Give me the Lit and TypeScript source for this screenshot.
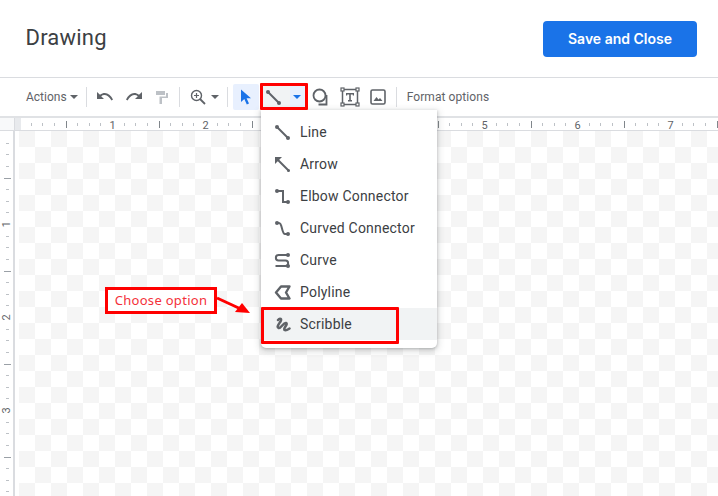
import { LitElement, html, css, svg } from "lit";
import { customElement } from "lit/decorators.js";

const ic = "#5f6368";
const menuIcons: Record<string, unknown> = {
  line: svg`<path d="M3 3L14 14" stroke=${ic} stroke-width="2"/><circle cx="3" cy="3" r="2" fill=${ic}/><circle cx="14" cy="14" r="2" fill=${ic}/>`,
  arrow: svg`<path d="M4 4L15 15" stroke=${ic} stroke-width="2"/><path d="M1 1H8L1 8Z" fill=${ic}/><circle cx="14.5" cy="14.500" r="1.500" fill=${ic}/>`,
  elbow: svg`<path d="M3 3H9V14H14" stroke=${ic} stroke-width="2" fill="none"/><circle cx="3" cy="3" r="2" fill=${ic}/><circle cx="14" cy="14" r="2" fill=${ic}/>`,
  curved: svg`<path d="M3 3H5C8.500 3 7.500 14 11 14H14" stroke=${ic} stroke-width="2" fill="none"/><circle cx="3" cy="3" r="2" fill=${ic}/><circle cx="14" cy="14" r="2" fill=${ic}/>`,
  curve: svg`<path d="M13 3H4.500C1 3 1 8.500 4.500 8.500H11.500C15 8.500 15 14 11.500 14H1.500" stroke=${ic} stroke-width="2" fill="none"/><circle cx="14" cy="3" r="2" fill=${ic}/><circle cx="14" cy="14" r="2" fill=${ic}/>`,
  polyline: svg`<path d="M7 2.500H15.500L12 8.500L15.500 14.500H7L2 8.500Z" stroke=${ic} stroke-width="2.400" fill="none" stroke-linejoin="round"/>`,
  scribble: svg`<path d="M4 4C6 1.500 8 3 6.500 5.500C4.500 8.500 2.500 11 4.500 12C7 13 9.500 6 12 7C14.500 8 9 12 10.500 14C12 15 14 13.500 15.500 12.500" stroke=${ic} stroke-width="2.500" fill="none" stroke-linecap="round"/>`,
};
const items = [
  ["Line", "line"],
  ["Arrow", "arrow"],
  ["Elbow Connector", "elbow"],
  ["Curved Connector", "curved"],
  ["Curve", "curve"],
  ["Polyline", "polyline"],
  ["Scribble", "scribble"],
];

const PX = 93;
function hRuler() {
  const out: unknown[] = [];
  for (let i = 0; i < 8; i++) {
    const base = 19 + i * PX;
    for (let k = 0; k < 8; k++) {
      const x = Math.round(base + (k * PX) / 8) + 0.5 - 21;
      if (x < 0) continue;
      if (k === 0) {
        // inches 3 and 4 lie beneath the open menu
        if (i > 0 && i !== 3 && i !== 4) out.push(svg`<text x=${x} y="11" text-anchor="middle" class="n">${i}</text>`);
      } else if (k === 4) {
        out.push(svg`<line x1=${x} x2=${x} y1="3" y2="10" stroke="#80868b"/>`);
      } else {
        out.push(svg`<line x1=${x} x2=${x} y1="5" y2="8" stroke="#bdc1c6"/>`);
      }
    }
  }
  return svg`<svg class="rsvg" width="697" height="13">${out}</svg>`;
}
function vRuler() {
  const out: unknown[] = [];
  for (let i = 0; i < 4; i++) {
    const base = i * 93;
    for (let k = 0; k < 8; k++) {
      const y = Math.round(base + (k * 93) / 8) + 0.5;
      if (k === 0) {
        if (i > 0) out.push(svg`<text x="7" y=${y + 3} text-anchor="middle" class="n" transform=${`rotate(-90 7 ${y})`}>${i}</text>`);
      } else if (k === 4) {
        out.push(svg`<line y1=${y} y2=${y} x1="4" x2="11" stroke="#9aa0a6"/>`);
      } else {
        out.push(svg`<line y1=${y} y2=${y} x1="6" x2="9" stroke="#bdc1c6"/>`);
      }
    }
  }
  return svg`<svg class="rsvg" width="14" height="365">${out}</svg>`;
}

@customElement("app-root")
export class AppRoot extends LitElement {
  static styles = css`
    :host { display: block; position: relative; width: 718px; height: 496px; overflow: hidden; background: #fff; font-family: Roboto, "Liberation Sans", sans-serif; color: #3c4043; }
    .head { height: 78px; box-sizing: border-box; display: flex; align-items: center; justify-content: space-between; padding: 0 21px 3px 25.5px; border-bottom: 1px solid #dadce0; }
    .title { font-size: 22px; color: #3c4043; letter-spacing: 0.2px; }
    .save { width: 154px; height: 36px; margin-top: 3px; border-radius: 4px; background: #1a73e8; color: #fff; display: flex; align-items: center; justify-content: center; font: 600 14px Inter, Roboto, sans-serif; }
    .tb { height: 38px; display: flex; align-items: center; padding-left: 26px; box-sizing: border-box; font-size: 12px; color: #5f6368; }
    .lbl { font-size: 12px; color: #5f6368; }
    .fmt { margin-left: 10px; letter-spacing: 0.08px; }
    .caret { width: 0; height: 0; border: 4px solid transparent; border-top-color: #5f6368; border-bottom: 0; }
    .sep { width: 1px; height: 20px; background: #dadce0; flex: none; }
    .tool { display: flex; align-items: center; justify-content: center; height: 26px; flex: none; }
    .sel { background: #e8f0fe; border-radius: 2px; }
    .hov { background: #f1f3f4; }
    .blue .caret { border-top-color: #1a73e8; margin-right: 3px; }
    .rulers { height: 15px; display: flex; box-sizing: border-box; border-top: 2px solid #e0e2e5; border-bottom: 1px solid #dadce0; }
    .corner { width: 15px; background: #f8f9fa; border-right: 1px solid #dadce0; box-sizing: border-box; flex: none; }
    .cgap { width: 6px; background: #e8eaed; flex: none; }
    .rsvg { display: block; flex: none; }
    .n { font: 11px Roboto, sans-serif; fill: #5f6368; }
    .main { display: flex; height: 365px; }
    .vr { width: 15px; box-sizing: border-box; border-right: 2px solid #dadce0; flex: none; }
    .gap { width: 4px; flex: none; }
    .canvas { flex: 1; background: repeating-conic-gradient(#f5f5f5 0 25%, #fff 0 50%) 16px 0 / 32px 32px; }
    .menu { position: absolute; left: 261px; top: 110px; width: 176px; height: 238px; box-sizing: border-box; padding: 6px 0; background: #fff; border-radius: 0 0 5px 5px; box-shadow: 0 1px 3px rgba(60,64,67,.3), 0 2px 6px 2px rgba(60,64,67,.15); }
    .it { height: 32px; display: flex; align-items: center; font-size: 14px; color: #3c4043; padding-left: 13px; letter-spacing: 0.2px; }
    .it svg { margin-right: 9px; flex: none; }
    .it.on { background: #f1f3f4; }
    .box { position: absolute; border: 3px solid #f00; box-sizing: border-box; border-radius: 1px; }
    .note { position: absolute; left: 105px; top: 287px; width: 112px; height: 27px; padding-bottom: 1px; border: 3px solid #f00; box-sizing: border-box; background: #fff; color: #f4303a; font: 13px "Noto Sans", "Open Sans", sans-serif; display: flex; align-items: center; justify-content: center; letter-spacing: 0.3px; }
    .arr { position: absolute; left: 215px; top: 294px; }
  `;

  render() {
    return html`
      <div class="head"><div class="title">Drawing</div><div class="save">Save and Close</div></div>
      <div class="tb">
        <span class="lbl">Actions</span><span class="caret" style="margin:0 8px 0 3px"></span>
        <span class="sep"></span>
        <span class="tool" style="width:18px;margin-left:9px">
          <svg width="18" height="12" viewBox="0 0 18 12"><path d="M1 1V8H8L5.200 5.200C7.800 3 12 3.500 15.500 9.500L17 8.500C14 2 8.500 0 4 3.800Z" fill="#5f6368"/></svg>
        </span>
        <span class="tool" style="width:18px;margin-left:11px">
          <svg width="18" height="12" viewBox="0 0 18 12"><path d="M17 1V8H10L12.800 5.200C10.200 3 6 3.500 2.500 9.500L1 8.500C4 2 9.500 0 14 3.800Z" fill="#5f6368"/></svg>
        </span>
        <span class="tool" style="width:14px;margin-left:12px">
          <svg width="14" height="15" viewBox="0 0 14 15"><path d="M1 1H10V5H1ZM11 3H13V8H7V14H4.500V6.500H11Z" fill="#bdc1c6"/></svg>
        </span>
        <span class="sep" style="margin-left:10px"></span>
        <span class="tool" style="width:16px;margin-left:10px">
          <svg width="16" height="16" viewBox="0 0 16 16"><circle cx="6.500" cy="6.500" r="5" fill="none" stroke="#5f6368" stroke-width="1.400"/><path d="M10 10L15 15" stroke="#5f6368" stroke-width="1.800"/><path d="M4 6.500H9M6.500 4V9" stroke="#5f6368" stroke-width="1.200"/></svg>
        </span>
        <span class="caret" style="margin:0 8px 0 5px"></span>
        <span class="sep"></span>
        <span class="tool sel" style="width:26px;margin-left:5px">
          <svg width="12" height="16" viewBox="0 0 12 16"><path d="M1 0.500V13L4.300 10L6.800 15.500L9 14.500L6.600 9.200H11Z" fill="#1a73e8"/></svg>
        </span>
        <span class="tool hov" style="width:29px;margin-left:2px;padding-right:3px;box-sizing:border-box">
          <svg width="17" height="17" viewBox="0 0 17 17">${menuIcons.line}</svg>
        </span>
        <span class="tool sel blue" style="width:17px;border-radius:0"><span class="caret"></span></span>
        <span class="tool" style="width:18px;margin-left:5px">
          <svg width="18" height="18" viewBox="0 0 18 18"><circle cx="7.500" cy="7.500" r="6" fill="none" stroke="#5f6368" stroke-width="1.800"/><path d="M14.500 7V16.500H6.500" fill="none" stroke="#5f6368" stroke-width="1.800"/></svg>
        </span>
        <span class="tool" style="width:20px;margin-left:10px">
          <svg width="20" height="20" viewBox="0 0 20 20"><rect x="2.500" y="2.500" width="15" height="15" fill="none" stroke="#5f6368" stroke-width="1.500"/><g fill="#fff" stroke="#5f6368" stroke-width="1.200"><rect x="1" y="1" width="3" height="3"/><rect x="16" y="1" width="3" height="3"/><rect x="1" y="16" width="3" height="3"/><rect x="16" y="16" width="3" height="3"/></g><path d="M6 6H14V8.500H12.800V7.400H10.800V13H12V14.500H8V13H9.200V7.400H7.200V8.500H6Z" fill="#5f6368"/></svg>
        </span>
        <span class="tool" style="width:16px;margin-left:10px">
          <svg width="16" height="16" viewBox="0 0 16 16"><rect x="1" y="1" width="14" height="14" rx="1.500" fill="none" stroke="#5f6368" stroke-width="1.600"/><path d="M3.500 12L6.500 8L8.500 10.500L10 9L12.500 12Z" fill="#5f6368"/></svg>
        </span>
        <span class="sep" style="margin-left:10px"></span>
        <span class="lbl fmt">Format options</span>
      </div>
      <div class="rulers">
        <div class="corner"></div><div class="cgap"></div>${hRuler()}
      </div>
      <div class="main">
        <div class="vr">${vRuler()}</div>
        <div class="gap"></div>
        <div class="canvas"></div>
      </div>
      <div class="menu">
        ${items.map(
          ([t, k], i) => html`<div class="it ${i === 6 ? "on" : ""}"><svg width="17" height="17" viewBox="0 0 17 17">${menuIcons[k]}</svg>${t}</div>`
        )}
      </div>
      <div class="box" style="left:260px;top:83px;width:48px;height:27px"></div>
      <div class="box" style="left:261px;top:307px;width:138px;height:37px"></div>
      <div class="note">Choose option</div>
      <svg class="arr" width="40" height="24" viewBox="0 0 40 24"><path d="M2 4L28 16" stroke="#f00" stroke-width="3"/><path d="M35 19L20 18L27 9Z" fill="#f00"/></svg>
    `;
  }
}
